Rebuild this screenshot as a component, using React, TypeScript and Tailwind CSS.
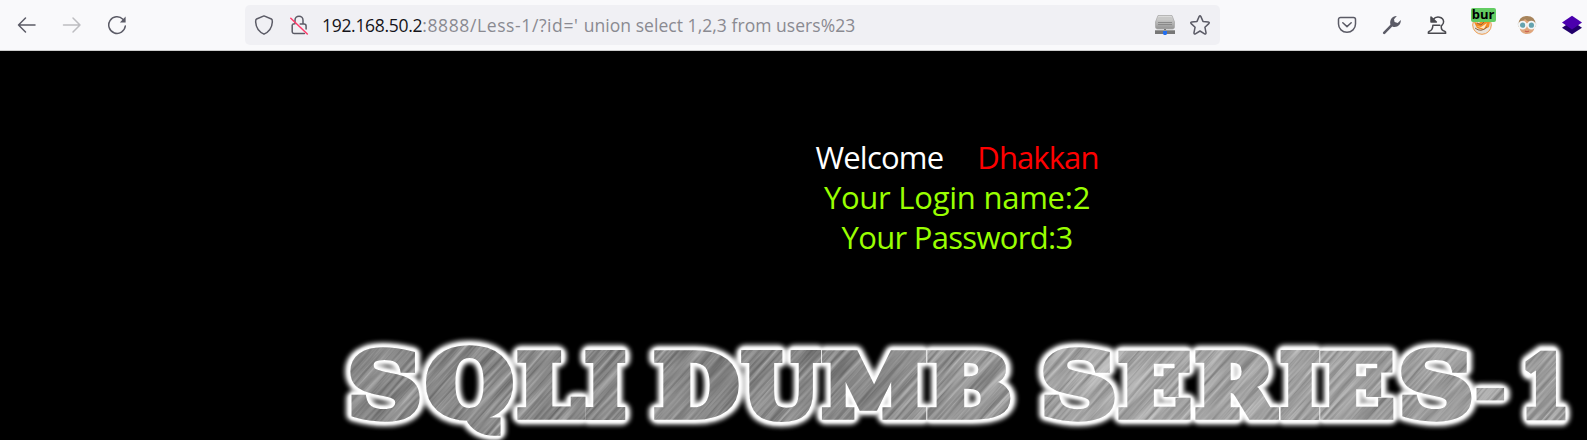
import type { ReactNode } from "react";

function ToolButton({ label, children }: { label: string; children: ReactNode }) {
  return (
    <button aria-label={label} className="flex h-10 w-[45px] shrink-0 items-center justify-center">
      {children}
    </button>
  );
}

function Glyph({ children, color = "#5b5b66", size = 20 }: { children: ReactNode; color?: string; size?: number }) {
  return (
    <svg width={size} height={size} viewBox="0 0 20 20" fill="none" stroke={color} strokeWidth="1.5" strokeLinecap="round" strokeLinejoin="round">
      {children}
    </svg>
  );
}

function Toolbar() {
  return (
    <header className="flex h-[51px] shrink-0 items-center border-b border-[#cccccc] bg-[#f9f9fb] pl-[4.5px]">
      <nav className="flex w-[240.5px] shrink-0">
        <ToolButton label="Back">
          <Glyph><path d="M18 10H1.5M8.5 3L1.5 10L8.5 17" /></Glyph>
        </ToolButton>
        <ToolButton label="Forward">
          <Glyph color="#bdbdc1"><path d="M1.5 10H18M11 3L18 10L11 17" /></Glyph>
        </ToolButton>
        <ToolButton label="Reload">
          <Glyph>
            <path d="M15.9 4.2A8.3 8.3 0 1 0 18.3 11" />
            <path d="M18.6 1.6V7.4H12.9Z" fill="#5b5b66" stroke="none" />
          </Glyph>
        </ToolButton>
      </nav>
      <div className="flex h-10 w-[975px] shrink-0 items-center rounded-[5px] bg-[#f0f0f4]">
        <span className="ml-[9px] flex">
          <Glyph><path d="M10 .9L17.4 4C18.5 4.5 18.4 5.4 18.3 7.2C18 12.7 15.4 16.5 10 19.2C4.6 16.5 2 12.7 1.7 7.2C1.6 5.4 1.5 4.5 2.6 4Z" /></Glyph>
        </span>
        <span className="ml-[15px] flex">
          <Glyph>
            <path d="M6 8.8V5.2A4 4 0 0 1 14 5.2V9M4 9.1H4.8M11.2 9.1H15A2.1 2.1 0 0 1 17.1 11.2V14M3.2 10V16.6A2 2 0 0 0 5.2 18.6H15.4" />
            <path d="M1.8 3.2L18.3 19" stroke="#ff3b6b" />
          </Glyph>
        </span>
        <span className="ml-[13px] w-[560px] whitespace-pre font-['Open_Sans','Noto_Sans',sans-serif] text-[17.5px] leading-10 text-[#8a8a91]">
          <span className="tracking-[-0.3px] text-[#15141a]">192.168.50.2</span>
          <span className="tracking-[0.61px]">:8888/Less-1/?id=' </span>
          <span className="tracking-[0.05px]">union select 1,2,3 from users%23</span>
        </span>
        <span className="ml-auto flex">
          <svg width="20" height="20" viewBox="0 0 20 20">
            <defs>
              <linearGradient id="drive" x2="0" y2="1">
                <stop stopColor="#e0e0df" /><stop offset="1" stopColor="#929292" />
              </linearGradient>
            </defs>
            <path d="M3 .5H17L19.5 7V12Q19.5 14 17.5 14H2.5Q.5 14 .5 12V7Z" fill="url(#drive)" stroke="#aaa" strokeWidth=".8" />
            <path d="M3.5 2H16.5L17.5 5H2.5Z" fill="#c8c8c7" />
            <path d="M3 7.5H17M3 9.5H17" stroke="#8a8a8a" />
            <path d="M9 14H11V16H9ZM0 16H20V19H0Z" fill="#777" />
            <path d="M0 15.5H20" stroke="#999" />
            <path d="M8 16H12V19L11 20H9L8 19Z" fill="#236ff0" />
          </svg>
        </span>
        <span className="ml-[15px] mr-[10px] flex">
          <Glyph><path d="M9.2 1.4Q10 .2 10.8 1.4L13 6.4L18.3 7C19.5 7.2 19.5 8 18.8 8.6L14.9 12.2L16 17.6C16.2 18.8 15.4 19.2 14.6 18.8L10 16L5.4 18.8C4.6 19.2 3.8 18.8 4 17.6L5.1 12.2L1.2 8.6C.5 8 .5 7.2 1.7 7L7 6.4Z" /></Glyph>
        </span>
      </div>
      <div className="ml-[104px] flex">
        <ToolButton label="Save to Pocket">
          <Glyph><path d="M3.5 2.5H16.5A2 2 0 0 1 18.5 4.5V9A8.5 8.3 0 0 1 1.5 9V4.5A2 2 0 0 1 3.5 2.5ZM5.8 7.7L10 11.6L14.2 7.7" /></Glyph>
        </ToolButton>
        <ToolButton label="Developer tools">
          <Glyph>
            <path d="M2.2 17.8L9.8 10.2" strokeWidth="2.6" />
            <path d="M8.4 9.6C7.3 4.6 10.6 .8 14.8 1.1L12 4.2L12.6 7L15.7 7.9L18.8 5C19.1 9.6 15.4 12.8 10.8 11.7Z" fill="#5b5b66" stroke="none" />
          </Glyph>
        </ToolButton>
        <ToolButton label="Undo close tab">
          <Glyph color="#4a4a4f">
            <path d="M4 2V7H9.4Z" fill="#4a4a4f" />
            <path d="M6.2 4.5C9 .6 16.3 1.4 16.6 6.6C16.7 9.5 14.2 10 14.2 11.5C14.2 14.5 15.2 15.7 17.6 16.3Q18.9 16.8 18.7 18.2H1.3Q1.1 16.8 2.4 16.3C4.8 15.6 5.7 13.9 5.9 10.3H12.8" />
          </Glyph>
        </ToolButton>
        <ToolButton label="Proxy">
          <span className="relative flex">
            <svg width="20" height="20" viewBox="0 0 20 20">
              <circle cx="10" cy="10" r="9.3" fill="#e9e4de" stroke="#ee9a4b" />
              <path d="M2 7L7 8L11 5L18 7L17 12L11 15L5 13Z" fill="#f28b23" />
              <path d="M4 11L9 12L15 8L12 14Z" fill="#ffe3ba" />
              <path d="M3 13Q9 18 15 12M5 8L9 10L12 7" stroke="#926443" fill="none" />
            </svg>
            <span className="absolute left-[-1px] top-[-7px] flex h-[14px] w-[25px] items-center justify-center rounded-[2px] bg-[#63cc62] font-['Open_Sans',sans-serif] text-[13px] font-bold leading-none text-black">
              <span className="-mt-[2px]">bur</span>
            </span>
          </span>
        </ToolButton>
        <ToolButton label="User agent">
          <svg width="20" height="20" viewBox="0 0 20 20">
            <path d="M1.5 9Q2 1 10 1Q18 1 18.5 9V12H1.5Z" fill="#a7845b" />
            <path d="M2.5 8Q5 7.5 8 4Q11 7 17.5 8V12Q17 18.5 10 19Q3 18.5 2.5 12Z" fill="#e0a67c" />
            <path d="M.5 9.2H19.5" stroke="#e4e9e9" strokeWidth="2" />
            <circle cx="5.6" cy="10.2" r="3.5" fill="#65a3ae" stroke="#f4f6f6" strokeWidth="1.8" />
            <circle cx="14.4" cy="10.2" r="3.5" fill="#65a3ae" stroke="#f4f6f6" strokeWidth="1.8" />
            <path d="M8 16Q10 17.4 12 16" stroke="#cc624f" strokeWidth="1.3" fill="none" />
          </svg>
        </ToolButton>
        <ToolButton label="Layers">
          <svg width="20" height="20" viewBox="0 0 20 20">
            <path d="M0 12.7L10 6L20 12.7L10 19.3Z" fill="#22006b" />
            <path d="M0 7.5L10 .8L20 7.5L10 14.4Z" fill="#4b00ae" />
          </svg>
        </ToolButton>
      </div>
    </header>
  );
}

type Letter = [char: string, left: number, right: number, top: number, bottom: number];

const LETTERS: Letter[] = [
  ["S", 350, 420, 348, 422],
  ["Q", 426, 513, 346, 436],
  ["L", 517, 586, 351, 420],
  ["I", 585, 626, 351, 420],
  ["D", 654, 739, 351, 420],
  ["U", 741, 822, 351, 422],
  ["M", 822, 926, 351, 420],
  ["B", 927, 1010, 351, 420],
  ["S", 1043, 1115, 348, 422],
  ["E", 1118, 1191, 351, 420],
  ["R", 1195, 1279, 351, 420],
  ["I", 1280, 1320, 351, 420],
  ["E", 1320, 1394, 351, 420],
  ["S", 1401, 1472, 348, 422],
  ["-", 1477, 1504, 387, 401],
  ["1", 1525, 1566, 351, 420],
];

const BANNER_TOP = 330;
const WEIGHT = 8;

const FITTED = (() => {
  const ctx = document.createElement("canvas").getContext("2d")!;
  ctx.font = "bold 100px 'DejaVu Serif'";
  return LETTERS.map(([char, left, right, top, bottom]) => {
    const m = ctx.measureText(char);
    const inset = WEIGHT / 2;
    const sx = (right - left - WEIGHT) / (m.actualBoundingBoxRight + m.actualBoundingBoxLeft);
    const sy = (bottom - top - WEIGHT) / (m.actualBoundingBoxAscent + m.actualBoundingBoxDescent);
    const x = left + inset + m.actualBoundingBoxLeft * sx;
    const y = top - BANNER_TOP + inset + m.actualBoundingBoxAscent * sy;
    return { char, transform: `translate(${x} ${y}) scale(${sx} ${sy})`, scale: (sx + sy) / 2 };
  });
})();

function Letters({ color, spread, join }: { color: string; spread: number; join: "round" | "miter" }) {
  return (
    <g fill={color} stroke={color} strokeLinejoin={join} strokeMiterlimit="2" fontFamily="'DejaVu Serif', serif" fontWeight="bold" fontSize="100">
      {FITTED.map(({ char, transform, scale }, i) => (
        <text key={i} transform={transform} strokeWidth={spread / scale}>{char}</text>
      ))}
    </g>
  );
}

function Banner() {
  return (
    <svg className="block shrink-0" width="1587" height="110" viewBox="0 0 1587 110" role="img">
      <defs>
        <filter id="glow" x="0" y="0" width="1587" height="110" filterUnits="userSpaceOnUse"><feGaussianBlur stdDeviation="2" /></filter>
        <filter id="soft" x="0" y="0" width="1587" height="110" filterUnits="userSpaceOnUse"><feGaussianBlur stdDeviation="0.9" /></filter>
        <filter id="brushed" x="-200" y="-1300" width="1800" height="2700" filterUnits="userSpaceOnUse" colorInterpolationFilters="sRGB">
          <feTurbulence type="fractalNoise" baseFrequency="0.012 0.3" numOctaves="3" seed="4" />
          <feColorMatrix values="1.3 0 0 0 -0.1  1.3 0 0 0 -0.1  1.3 0 0 0 -0.1  0 0 0 0 1" />
        </filter>
        <linearGradient id="steel" x1="340" y1="0" x2="1570" y2="0" gradientUnits="userSpaceOnUse">
          <stop stopColor="#8a8a8a" /><stop offset=".4" stopColor="#868686" /><stop offset=".52" stopColor="#9d9d9d" /><stop offset=".6" stopColor="#b2b2b2" /><stop offset="1" stopColor="#a0a0a0" />
        </linearGradient>
        <mask id="face" maskUnits="userSpaceOnUse" x="0" y="0" width="1587" height="110">
          <Letters color="#fff" spread={WEIGHT} join="miter" />
        </mask>
      </defs>
      <g filter="url(#glow)" opacity=".85"><Letters color="#fff" spread={WEIGHT + 11} join="round" /></g>
      <g filter="url(#soft)"><Letters color="#fff" spread={WEIGHT + 6} join="round" /></g>
      <g mask="url(#face)">
        <rect width="1587" height="110" fill="url(#steel)" />
        <g opacity=".32">
          <g transform="rotate(-48)"><rect x="-200" y="-1300" width="1800" height="2700" filter="url(#brushed)" /></g>
        </g>
      </g>
    </svg>
  );
}

export default function App() {
  return (
    <div className="flex h-[440px] w-[1587px] flex-col overflow-hidden bg-black">
      <Toolbar />
      <main className="flex h-[279px] shrink-0 flex-col items-center pl-[327px] pt-[86px] font-['Open_Sans','Noto_Sans',sans-serif] text-[31px] leading-10">
        <p className="flex gap-[34px]">
          <span className="tracking-[-0.8px] text-white">Welcome</span>
          <span className="tracking-[-0.9px] text-[#ff0000]">Dhakkan</span>
        </p>
        <p className="tracking-[-0.25px] text-[#99ff00]">Your Login name:2</p>
        <p className="tracking-[-0.7px] text-[#99ff00]">Your Password:3</p>
      </main>
      <Banner />
    </div>
  );
}
